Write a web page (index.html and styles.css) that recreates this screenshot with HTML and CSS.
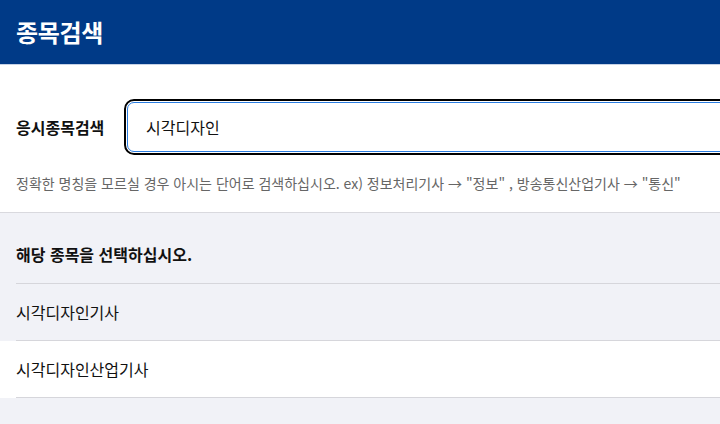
FILE: index.html
```html
<!DOCTYPE html>
<html lang="ko">
<head>
<meta charset="utf-8">
<title>종목검색</title>
<link rel="stylesheet" href="styles.css">
</head>
<body>
<header class="top-bar">
  <h1 class="top-title">종목검색</h1>
</header>
<section class="search">
  <div class="search-row">
    <label class="search-label" for="q">응시종목검색</label>
    <input class="search-input" id="q" type="text" value="시각디자인">
  </div>
  <p class="search-hint">정확한 명칭을 모르실 경우 아시는 단어로 검색하십시오. ex) 정보처리기사 → "정보" , 방송통신산업기사 → "통신"</p>
</section>
<section class="results">
  <div class="result-head"><span class="result-title">해당 종목을 선택하십시오.</span></div>
  <ul class="result-list">
    <li class="result-item"><span class="result-text">시각디자인기사</span></li>
    <li class="result-item is-white"><span class="result-text">시각디자인산업기사</span></li>
  </ul>
</section>
</body>
</html>
```

FILE: styles.css
```css
html, body {
  margin: 0;
  padding: 0;
  overflow: hidden;
  height: 100%;
}
body {
  font-family: "Noto Sans CJK KR", "Noto Sans", sans-serif;
  background: #f1f2f7;
  color: #111;
}
.top-bar {
  height: 64px;
  background: #003a87;
  border-bottom: 1px solid #c6d2e6;
  display: flex;
  align-items: center;
  padding: 0 16px;
  box-sizing: content-box;
}
.top-title {
  margin: 0;
  color: #fff;
  font-size: 24px;
  font-weight: 700;
  line-height: 30px;
  letter-spacing: -0.3px;
}
.search {
  background: #fff;
  padding: 37px 0 19px 16px;
  border-bottom: 1px solid #d9d9de;
  overflow: hidden;
}
.search-row {
  display: flex;
  align-items: center;
}
.search-label {
  flex: 0 0 111px;
  font-size: 16px;
  font-weight: 700;
  line-height: 22px;
  color: #111;
}
.search-input {
  flex: 0 0 auto;
  width: 640px;
  height: 50px;
  box-sizing: border-box;
  border: 1px solid #2a7de1;
  border-radius: 7px;
  outline: 2px solid #000;
  outline-offset: 1px;
  padding: 0 18px;
  font-family: inherit;
  font-size: 16px;
  color: #111;
  background: #fff;
}
.search-hint {
  margin: 21px 0 0;
  font-size: 14px;
  line-height: 20px;
  color: #666;
  letter-spacing: 0;
  white-space: nowrap;
}
.results {
  background: #f1f2f7;
}
.result-head {
  padding: 30px 0 0 16px;
}
.result-title {
  display: block;
  font-size: 16px;
  font-weight: 700;
  line-height: 22px;
  padding-bottom: 18px;
  border-bottom: 1px solid #d6d6db;
}
.result-list {
  list-style: none;
  margin: 0;
  padding: 0;
}
.result-item {
  padding-left: 16px;
}
.result-item.is-white {
  background: #fff;
}
.result-text {
  display: flex;
  align-items: center;
  height: 56px;
  font-size: 16px;
  color: #111;
  border-bottom: 1px solid #d6d6db;
}
```
